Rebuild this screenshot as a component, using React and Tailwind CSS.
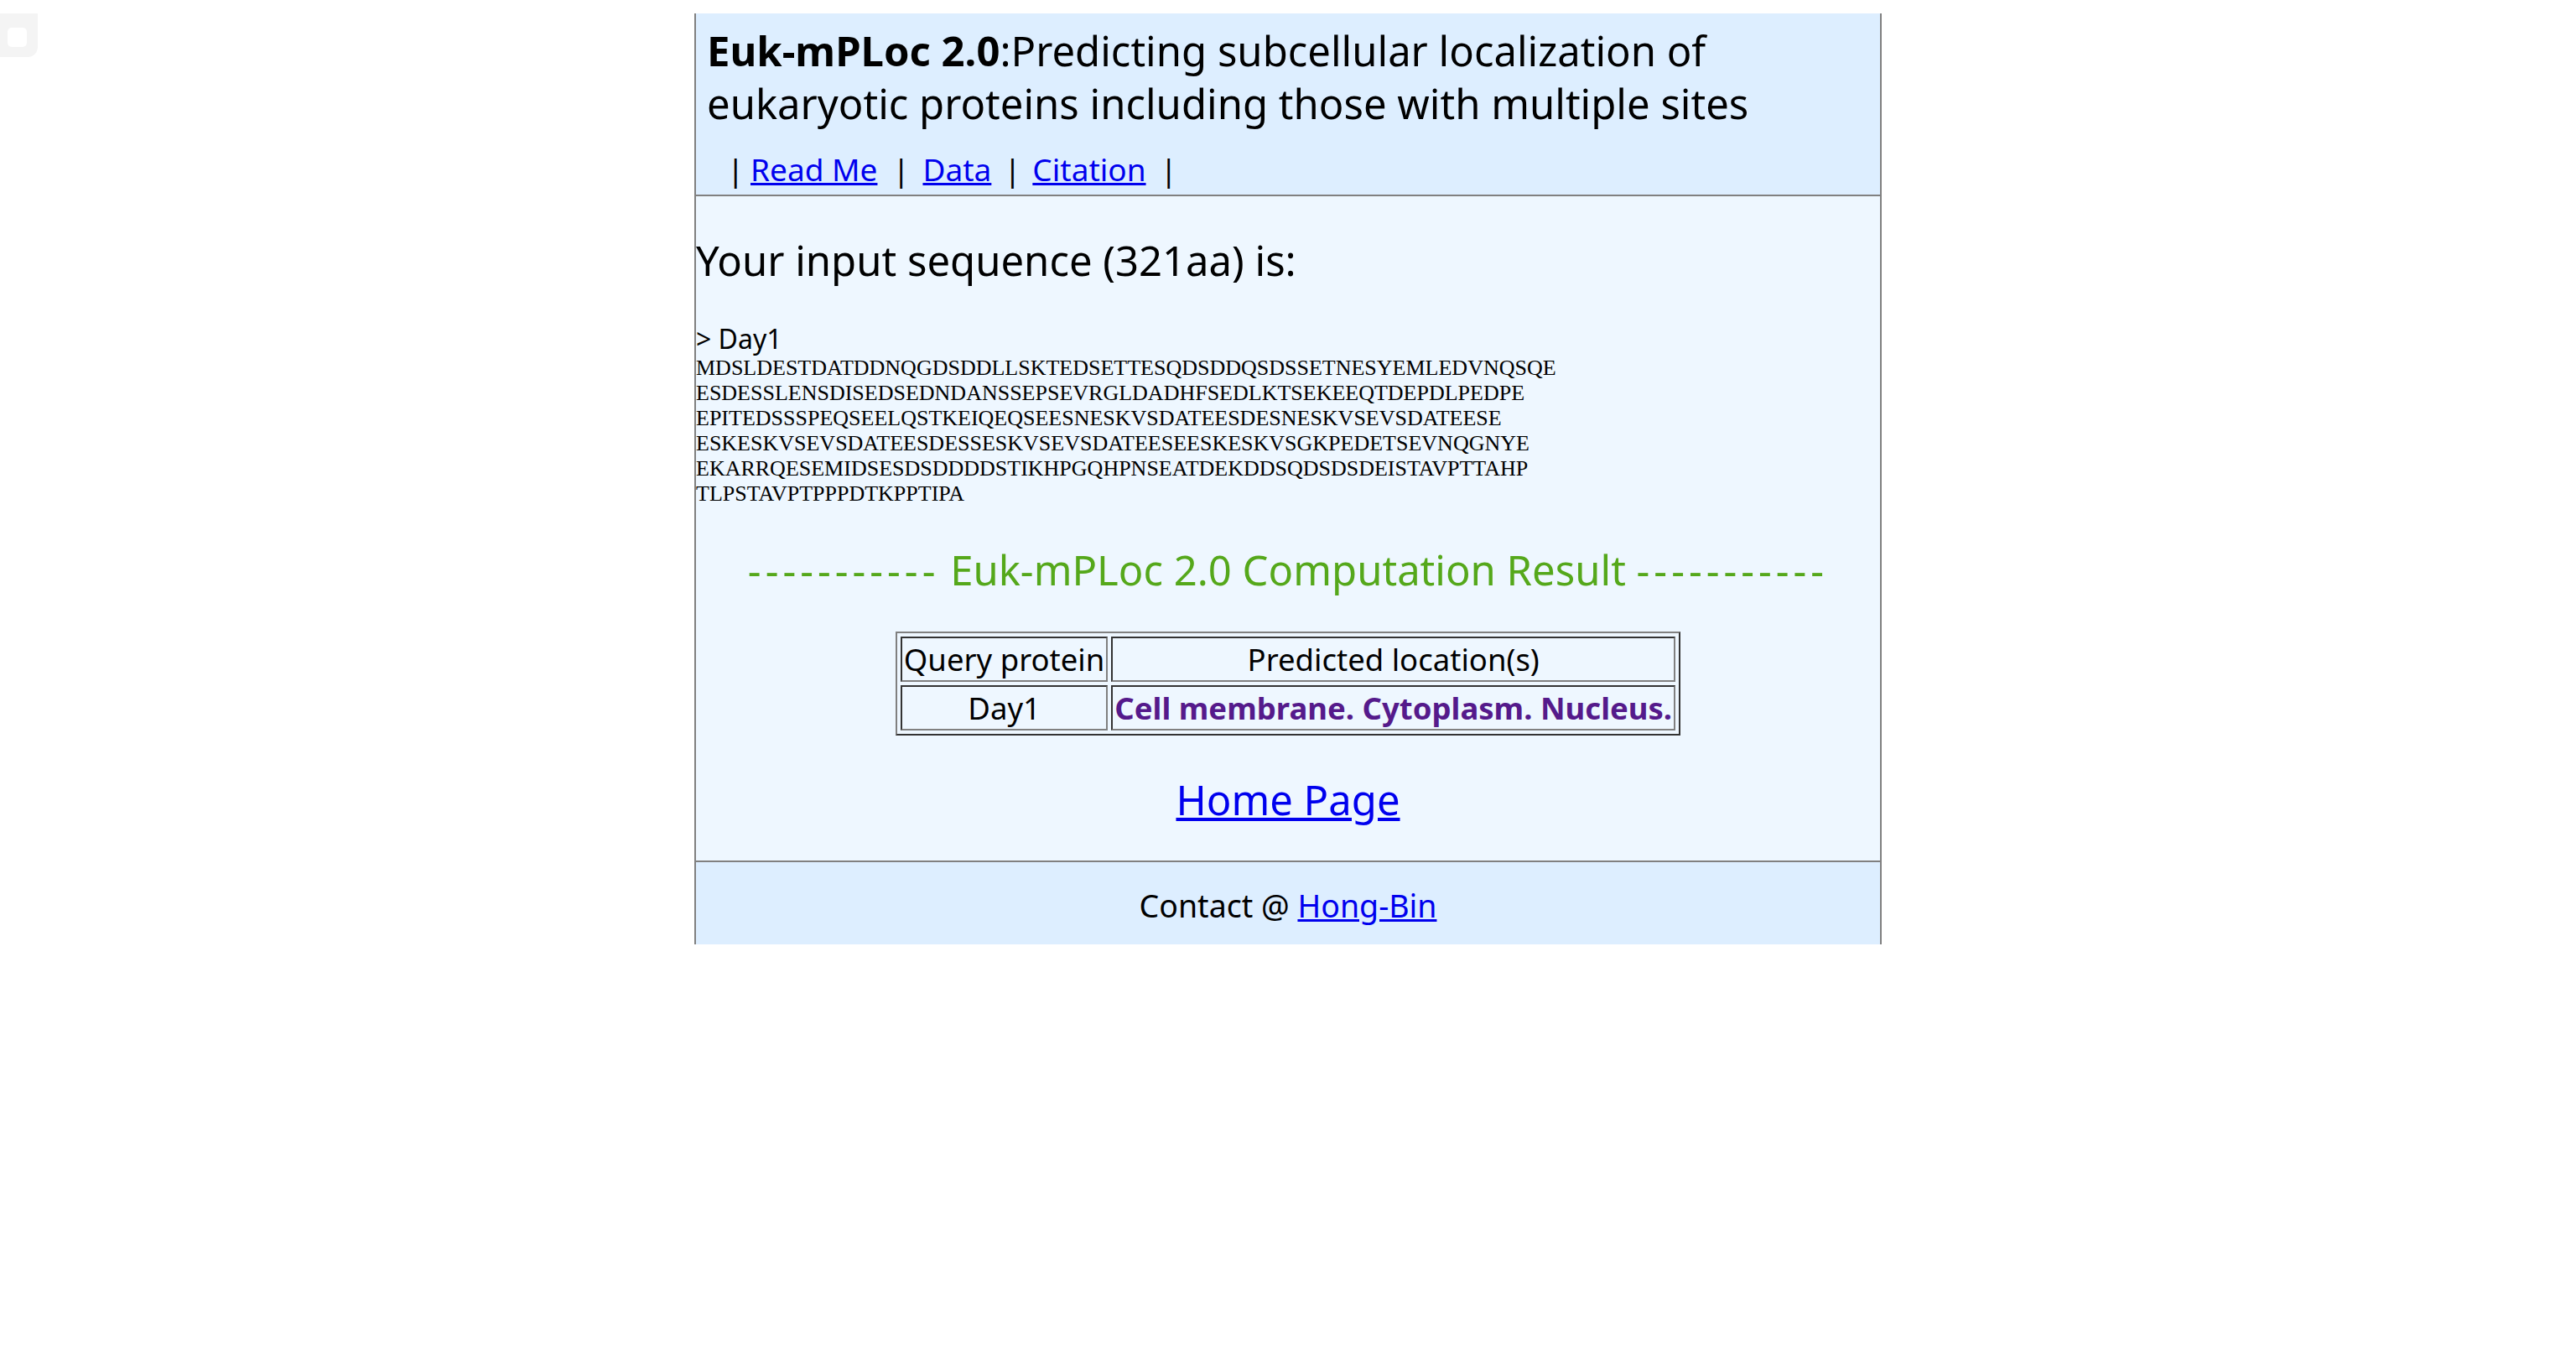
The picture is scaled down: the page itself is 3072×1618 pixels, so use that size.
const sans = "font-['Noto_Sans','Open_Sans',sans-serif]";

const sequence = [
  "MDSLDESTDATDDNQGDSDDLLSKTEDSETTESQDSDDQSDSSETNESYEMLEDVNQSQE",
  "ESDESSLENSDISEDSEDNDANSSEPSEVRGLDADHFSEDLKTSEKEEQTDEPDLPEDPE",
  "EPITEDSSSPEQSEELQSTKEIQEQSEESNESKVSDATEESDESNESKVSEVSDATEESE",
  "ESKESKVSEVSDATEESDESSESKVSEVSDATEESEESKESKVSGKPEDETSEVNQGNYE",
  "EKARRQESEMIDSESDSDDDDSTIKHPGQHPNSEATDEKDDSQDSDSDEISTAVPTTAHP",
  "TLPSTAVPTPPPDTKPPTIPA",
];

function Link({ children, className = "" }) {
  return (
    <a href="#" className={"text-[#0000ee] underline " + className}>
      {children}
    </a>
  );
}

function Pipe({ className = "" }) {
  return <span className={"inline-block w-[10px] text-center " + className}>|</span>;
}

const cell =
  "p-[2px] text-center border-2 border-t-[#333333] border-l-[#333333] border-b-[#808080] border-r-[#808080]";

export default function App() {
  return (
    <div className={"relative min-h-screen bg-white text-black " + sans}>
      <div className="absolute left-0 top-0 w-[45px] h-[52px] bg-[#f4f4f4] rounded-br-[12px]">
        <div className="ml-[9px] mt-[17px] w-[23px] h-[23px] bg-white rounded-[5px]" />
      </div>

      <div className="mx-auto mt-[16px] w-[1416px] border-x-2 border-[#808080]">
        {/* header */}
        <div className="bg-[#ddeeff] pt-[12.5px] pb-[8px] px-[13px] border-b-2 border-[#808080]">
          <div className="text-[49px] leading-[63px]">
            <b>Euk-mPLoc 2.0</b>:Predicting subcellular localization of eukaryotic proteins including those with multiple sites
          </div>
          <div className="mt-[25px] flex text-[37px] leading-[44px]">
            <Pipe className="ml-[24px]" />
            <Link className="ml-[18px]">Read Me</Link>
            <Pipe className="ml-[18px]" />
            <Link className="ml-[26px]">Data</Link>
            <Pipe className="ml-[15px]" />
            <Link className="ml-[24px]">Citation</Link>
            <Pipe className="ml-[17px]" />
          </div>
        </div>

        {/* body */}
        <div className="bg-[#eef7ff] pt-[45px] pb-[42px]">
          <div className="text-[49px] leading-[62px]">Your input sequence (321aa) is:</div>
          <div className="mt-[43px] text-[32px] leading-[40px]">&gt; Day1</div>
          <div className="font-['Liberation_Serif',serif] text-[26px] leading-[30px]">
            {sequence.map((line) => (
              <div key={line}>{line}</div>
            ))}
          </div>

          <div className="mt-[44px] text-center text-[49px] leading-[62px] text-[#55a81b]">
            <span className="tracking-[5px]">-----------</span> Euk-mPLoc 2.0 Computation Result{" "}
            <span className="tracking-[5px]">-----------</span>
          </div>

          <div className="mt-[43px] flex justify-center">
            <table className="border-separate border-spacing-[4px] border-2 border-t-[#808080] border-l-[#808080] border-b-[#333333] border-r-[#333333] text-[36.5px] leading-[46px]">
              <tbody>
                <tr>
                  <td className={cell}>Query protein</td>
                  <td className={cell}>Predicted location(s)</td>
                </tr>
                <tr>
                  <td className={cell}>Day1</td>
                  <td className={cell + " font-bold text-[#551a8b]"}>Cell membrane. Cytoplasm. Nucleus.</td>
                </tr>
              </tbody>
            </table>
          </div>

          <div className="mt-[45px] text-center text-[49px] leading-[62px]">
            <Link>Home Page</Link>
          </div>
        </div>

        {/* footer */}
        <div className="bg-[#ddeeff] border-t-2 border-[#808080] pt-[30px] pb-[24px] text-center text-[37.5px] leading-[44px]">
          Contact @ <Link>Hong-Bin</Link>
        </div>
      </div>
    </div>
  );
}
